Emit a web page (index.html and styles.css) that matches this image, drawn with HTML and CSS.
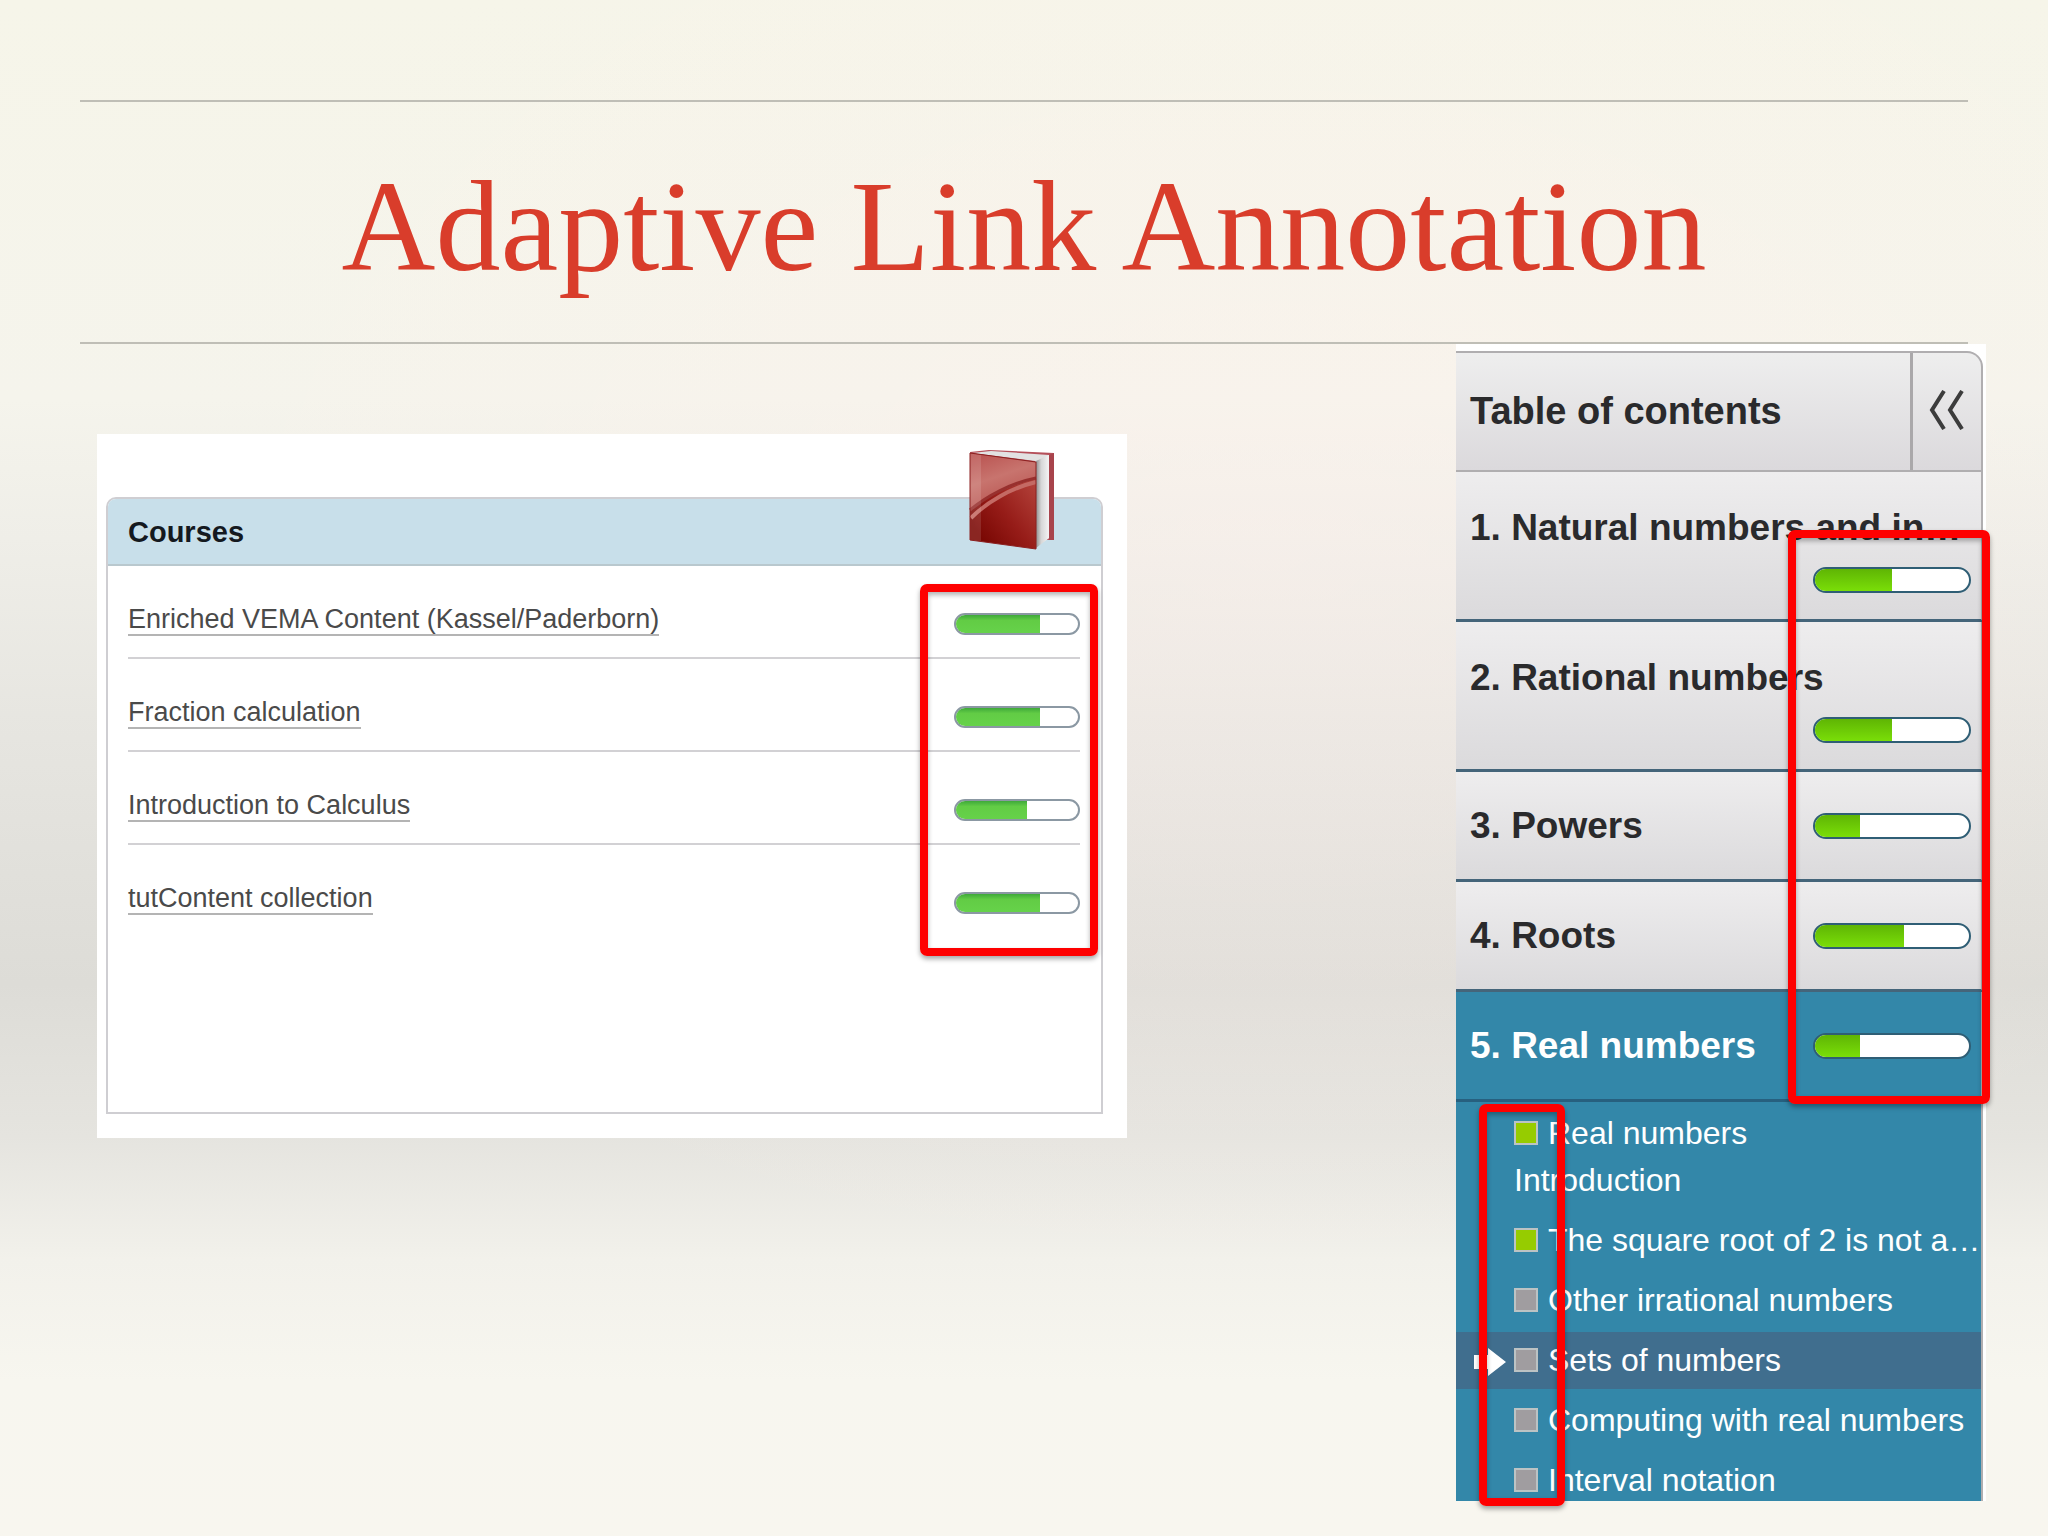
FILE: index.html
```html
<!DOCTYPE html>
<html lang="en">
<head>
    <meta charset="UTF-8">
    <meta name="viewport" content="width=device-width, initial-scale=1.0">
    <title>Adaptive Link Annotation</title>
    <link rel="stylesheet" href="styles.css">
</head>
<body>
    <header>
        <h1>Adaptive Link Annotation</h1>
    </header>
    <main>
        <section class="courses">
            <div class="courses-box">
                <div class="courses-header">
                    <h2>Courses</h2>
                </div>
                <ul class="course-list">
                    <li><a href="#">Enriched VEMA Content (Kassel/Paderborn)</a><span class="bar"><span style="width: 69%"></span></span></li>
                    <li><a href="#">Fraction calculation</a><span class="bar"><span style="width: 69%"></span></span></li>
                    <li><a href="#">Introduction to Calculus</a><span class="bar"><span style="width: 58%"></span></span></li>
                    <li><a href="#">tutContent collection</a><span class="bar"><span style="width: 69%"></span></span></li>
                </ul>
            </div>
            <svg class="book" viewBox="0 0 86 100" width="86" height="100" aria-hidden="true">
                <defs>
                    <linearGradient id="cover" x1="0.3" y1="1" x2="1" y2="0.2">
                        <stop offset="0" stop-color="#7a0804"/>
                        <stop offset="0.4" stop-color="#961c18"/>
                        <stop offset="1" stop-color="#b84840"/>
                    </linearGradient>
                    <linearGradient id="shine" x1="0" y1="0" x2="0.4" y2="1">
                        <stop offset="0" stop-color="#b8504e"/>
                        <stop offset="0.5" stop-color="#c8746e"/>
                        <stop offset="1" stop-color="#b85450"/>
                    </linearGradient>
                    <linearGradient id="pages" x1="0" y1="0" x2="1" y2="0">
                        <stop offset="0" stop-color="#8f8f8f"/>
                        <stop offset="0.4" stop-color="#d6d6d6"/>
                        <stop offset="1" stop-color="#f4f4f4"/>
                    </linearGradient>
                </defs>
                <path d="M1 2 L20 0 L85 3 L85 90 L79 90 L20 80 Z" fill="#b5505a"/>
                <path d="M80 5 L85 3 L85 90 L80 90 Z" fill="#a8444c"/>
                <path d="M3 3 L22 1 L80 5 L80 88 L66 98 L66 11 Z" fill="#e2e2e2"/>
                <path d="M67 11 L80 5 L80 88 L67 98 Z" fill="url(#pages)"/>
                <path d="M1 3 L67 12 L67 99 L1 90 Z" fill="url(#cover)"/>
                <path d="M1 3 L67 12 L67 29 C42 35 18 46 1 60 Z" fill="url(#shine)"/>
                <path d="M1 60 C18 46 42 33 67 28" fill="none" stroke="#98302e" stroke-width="3"/>
                <path d="M2 68 C18 52 42 38 67 32" fill="none" stroke="#c46a64" stroke-width="4"/>
                <path d="M1 3 L12 5 L12 92 L1 90 Z" fill="#fff" fill-opacity="0.12"/>
                <path d="M1 3 L67 12 L67 99 L1 90 Z" fill="none" stroke="#8c2020" stroke-width="1"/>
            </svg>
            <div class="mark mark-courses"></div>
        </section>

        <nav class="toc">
            <div class="toc-header">
                <h2>Table of contents</h2>
                <button type="button" aria-label="Collapse">
                    <svg viewBox="0 0 36 40" width="36" height="40"><path d="M15 1 L3 20 L15 39 M33 1 L21 20 L33 39" fill="none" stroke="#3c3c3c" stroke-width="4"/></svg>
                </button>
            </div>
            <div class="chapter tall"><a href="#">1. Natural numbers and in…</a><span class="bar"><span style="width: 50%"></span></span></div>
            <div class="chapter tall"><a href="#">2. Rational numbers</a><span class="bar"><span style="width: 50%"></span></span></div>
            <div class="chapter"><a href="#">3. Powers</a><span class="bar"><span style="width: 29%"></span></span></div>
            <div class="chapter"><a href="#">4. Roots</a><span class="bar"><span style="width: 58%"></span></span></div>
            <div class="chapter open"><a href="#">5. Real numbers</a><span class="bar"><span style="width: 29%"></span></span></div>
            <ul class="pages">
                <li class="done"><a href="#">Real numbers<br>Introduction</a></li>
                <li class="done"><a href="#">The square root of 2 is not a…</a></li>
                <li><a href="#">Other irrational numbers</a></li>
                <li class="current">
                    <svg class="arrow" viewBox="0 0 32 28" width="32" height="28" aria-hidden="true"><path d="M0 7 H14 V0 L32 14 L14 28 V21 H0 Z" fill="#fff"/></svg>
                    <a href="#">Sets of numbers</a>
                </li>
                <li><a href="#">Computing with real numbers</a></li>
                <li><a href="#">Interval notation</a></li>
            </ul>
            <div class="mark mark-bars"></div>
            <div class="mark mark-squares"></div>
        </nav>
    </main>
</body>
</html>
```

FILE: styles.css
```css
*, *::before {
    box-sizing: border-box;
}

body {
    margin: 0;
    padding-top: 100px;
    min-height: 100vh;
    font-family: "Liberation Sans", Arial, sans-serif;
    background:
        radial-gradient(ellipse 55% 50% at 62% 35%, rgba(255, 240, 236, 0.4), rgba(255, 240, 236, 0)),
        linear-gradient(#f6f5e9 0%, #f5f4ec 26%, #efeee8 35%, #e6e5e0 48%, #dddcd7 64%, #e5e4df 74%, #f2f1eb 82%, #f7f6ef 90%, #f8f6ef 100%);
}

h1, h2, ul {
    margin: 0;
    padding: 0;
}

ul {
    list-style: none;
}

header {
    margin: 0 80px;
    border-top: 2px solid #bfbeb6;
    border-bottom: 2px solid #bfbeb6;
}

h1 {
    padding-top: 8px;
    font-family: "Liberation Serif", "Times New Roman", serif;
    font-size: 130px;
    font-weight: normal;
    line-height: 232px;
    text-align: center;
    color: #d93d2b;
}

main {
    display: grid;
    grid-template-columns: 1030fr 530fr;
    align-items: start;
    gap: 329px;
    padding: 0 62px 0 97px;
}

/* courses */

.courses {
    position: relative;
    margin-top: 90px;
    padding: 63px 24px 24px 9px;
    background: #fff;
}

.courses-box {
    min-height: 617px;
    border: 2px solid #cfced2;
    border-radius: 10px 10px 0 0;
}

.courses-header {
    padding: 2px 20px 0;
    border-bottom: 2px solid #b9c8ce;
    border-radius: 8px 8px 0 0;
    background: #c8dfea;
}

.courses-header h2 {
    font-size: 29px;
    line-height: 63px;
    color: #14191f;
}

.course-list {
    padding: 0 21px 0 20px;
}

.course-list li {
    display: flex;
    align-items: center;
    justify-content: space-between;
    height: 93px;
    padding-top: 24px;
    border-bottom: 2px solid #d2d1d4;
}

.course-list li:last-child {
    border-bottom-color: transparent;
}

.course-list a {
    margin-bottom: 8px;
    border-bottom: 2px solid #b4b4b4;
    font-size: 27px;
    line-height: 30px;
    color: #4a4a4a;
    text-decoration: none;
}

.book {
    position: absolute;
    top: 16px;
    right: 72px;
}

.bar {
    display: block;
    flex: none;
    overflow: hidden;
    width: 126px;
    height: 22px;
    border: 2px solid #8b98a3;
    border-radius: 11px;
    background: #fff;
}

.bar span {
    display: block;
    height: 100%;
    background: linear-gradient(#3fa93a, #62cc45 30%, #66d24a);
}

/* table of contents */

.toc {
    position: relative;
    padding: 7px 3px 0 0;
    background: #fff;
}

.toc-header {
    display: flex;
    height: 121px;
    border: 2px solid #b0aeb0;
    border-left: none;
    border-radius: 0 16px 0 0;
    background: linear-gradient(#eeeeee, #dbd9dc);
}

.toc-header h2 {
    flex: 1;
    padding-left: 14px;
    font-size: 38px;
    line-height: 117px;
    color: #2a2a2c;
}

.toc-header button {
    width: 71px;
    padding: 0;
    border: none;
    border-left: 3px solid #aaa8aa;
    background: none;
}

.chapter {
    display: flex;
    align-items: center;
    justify-content: space-between;
    height: 110px;
    padding: 0 10px 0 14px;
    border-right: 2px solid #b0aeb0;
    border-bottom: 3px solid #45657a;
    background: linear-gradient(#eeedee, #dbdadc);
}

.chapter a {
    font-size: 37px;
    font-weight: bold;
    line-height: 42px;
    white-space: nowrap;
    color: #2a2a2c;
    text-decoration: none;
}

.chapter .bar {
    width: 158px;
    height: 26px;
    border-color: #2f5e75;
    border-radius: 13px;
}

.chapter .bar span {
    background: linear-gradient(#5fb504, #7ade08);
}

.tall {
    flex-direction: column;
    align-items: flex-start;
    height: 150px;
    padding-top: 35px;
    padding-bottom: 26px;
}

.tall .bar {
    align-self: flex-end;
}

.open {
    border-bottom-color: #27607f;
    background: #3387a9;
}

.open a {
    color: #fff;
}

.pages {
    display: flex;
    flex-direction: column;
    gap: 3px;
    padding-top: 3px;
    border-right: 2px solid #b0aeb0;
    background: #3387a9;
}

.pages li {
    position: relative;
    padding: 5px 0 5px 58px;
    font-size: 32px;
    line-height: 47px;
    white-space: nowrap;
}

.pages li:last-child {
    height: 49px;
    padding-bottom: 0;
}

.pages a {
    color: #fff;
    text-decoration: none;
}

.pages a::before {
    content: "";
    display: inline-block;
    width: 24px;
    height: 24px;
    margin-right: 10px;
    border: 2px solid #bcc3c4;
    background: #a09da0;
    vertical-align: -1px;
}

.pages .done a::before {
    background: #96cc00;
}

.pages .current {
    background: #406e8e;
}

.arrow {
    position: absolute;
    top: 16px;
    left: 18px;
}

/* red outlines drawn over the panels */

.mark {
    position: absolute;
    border: 8px solid #fe0000;
    border-radius: 7px;
    box-shadow: 0 3px 5px rgba(0, 0, 0, 0.35), inset 0 3px 5px rgba(0, 0, 0, 0.3);
}

.mark-courses {
    top: 150px;
    right: 29px;
    width: 178px;
    height: 372px;
}

.mark-bars {
    top: 186px;
    right: -4px;
    width: 202px;
    height: 574px;
}

.mark-squares {
    top: 760px;
    left: 23px;
    width: 86px;
    height: 402px;
}
```
